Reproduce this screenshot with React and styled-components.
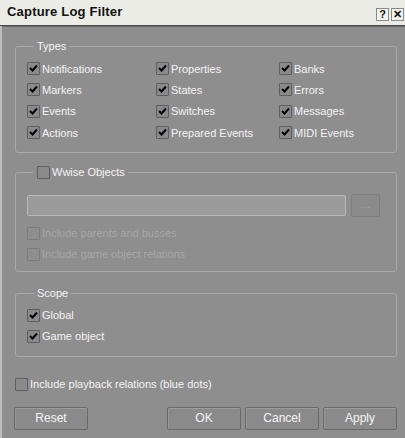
import React from 'react';
import styled, { createGlobalStyle } from 'styled-components';

const Global = createGlobalStyle`
  html, body {
    margin: 0;
    padding: 0;
    background: #8e8e8e;
  }
  * {
    box-sizing: border-box;
  }
`;

const Window = styled('div')`
  width: 405px;
  height: 438px;
  display: flex;
  flex-direction: column;
  background-color: #8e8e8e;
  font-family: 'Liberation Sans', Arial, sans-serif;
  font-size: 11px;
  color: #f4f4f4;
  overflow: hidden;
`;

const TitleBar = styled('div')`
  height: 26px;
  display: flex;
  align-items: center;
  justify-content: space-between;
  padding: 0 1px 2px 7px;
  background-color: #ecece6;
  border-bottom: 1px solid #4a4a4a;
  box-shadow: 0 1px 0 #6c6c6c;
`;

const Title = styled('div')`
  font-size: 13px;
  font-weight: bold;
  color: #111;
  letter-spacing: 0.2px;
`;

const TitleButtons = styled('div')`
  display: flex;
  gap: 2px;
  margin-top: 6px;
`;

const TitleButton = styled('div')`
  width: 13px;
  height: 13px;
  display: flex;
  align-items: center;
  justify-content: center;
  border: 1px solid #8a8a8a;
  background-color: #f2f2ee;
  color: #111;
  font-size: 11px;
  font-weight: bold;
  line-height: 1;
`;

const Body = styled('div')`
  flex: 1;
  display: flex;
  flex-direction: column;
  padding: 14px 8px 0 15px;
  border-left: 2px solid #bdbdbd;
`;

const Group = styled('fieldset')`
  margin: 0 0 ${p => p.$gap || 0}px -2px;
  padding: ${p => p.$pad || '5px 0 8px 11px'};
  border: 1px solid #a9a9a9;
  border-radius: 3px;
  min-width: 0;
`;

const Legend = styled('legend')`
  margin-left: ${p => p.$ml || 7}px;
  padding: 0 3px 0 ${p => p.$pl || 3}px;
  line-height: 13px;
  display: flex;
  align-items: center;
`;

const TypeGrid = styled('div')`
  display: grid;
  grid-template-columns: 129px 123px 1fr;
  grid-auto-rows: 21.4px;
`;

const Row = styled('label')`
  display: flex;
  align-items: center;
  gap: 2px;
  height: ${p => p.$h || 21}px;
  color: ${p => (p.$disabled ? '#a7a7a7' : '#f4f4f4')};
`;

const Box = styled('span')`
  width: 13px;
  height: 13px;
  flex: none;
  display: flex;
  align-items: center;
  justify-content: center;
  border: 1px solid ${p => (p.$disabled ? '#7c7c7c' : '#5e5e5e')};
  background-color: ${p => (p.$disabled ? '#8e8e8e' : '#8a8a8a')};
  border-radius: 1px;
`;

const FieldRow = styled('div')`
  display: flex;
  align-items: center;
  gap: 5px;
  margin-bottom: 6px;
`;

const Field = styled('div')`
  width: 319px;
  height: 21px;
  background-color: #9b9b9b;
  border: 1px solid #b8b8b8;
  border-radius: 2px;
`;

const Browse = styled('div')`
  width: 29px;
  height: 23px;
  display: flex;
  align-items: center;
  justify-content: center;
  background-color: #8b8b8b;
  border: 1px solid #7e7e7e;
  border-radius: 2px;
  color: #a9a9a9;
  font-size: 9px;
  letter-spacing: 1px;
`;

const Footer = styled('div')`
  display: flex;
  align-items: center;
  margin-top: ${p => p.$mt || 0}px;
  margin-left: -2px;
`;

const Button = styled('button')`
  width: 75px;
  height: 23px;
  margin-left: ${p => p.$ml ?? 4}px;
  padding: 0;
  font-family: inherit;
  font-size: 12px;
  color: #f6f6f6;
  background-color: #8a8a8a;
  border: 1px solid #696969;
  border-radius: 2px;
  box-shadow: inset 0 1px 0 #9c9c9c, inset 1px 0 0 #979797;
`;

const Check = ({ checked, disabled }) => (
  <Box $disabled={disabled}>
    {checked && (
      <svg width="9" height="9" viewBox="0 0 9 9">
        <path d="M1 4 L3.5 6.5 L8 1.5" stroke="#000" strokeWidth="2" fill="none" />
      </svg>
    )}
  </Box>
);

const Option = ({ label, checked, disabled, h }) => (
  <Row $disabled={disabled} $h={h}>
    <Check checked={checked} disabled={disabled} />
    {label}
  </Row>
);

const types = [
  'Notifications', 'Properties', 'Banks',
  'Markers', 'States', 'Errors',
  'Events', 'Switches', 'Messages',
  'Actions', 'Prepared Events', 'MIDI Events'
];

export default function App() {
  return (
    <Window>
      <Global />
      <TitleBar>
        <Title>Capture Log Filter</Title>
        <TitleButtons>
          <TitleButton>?</TitleButton>
          <TitleButton>✕</TitleButton>
        </TitleButtons>
      </TitleBar>
      <Body>
        <Group $gap={12}>
          <Legend>Types</Legend>
          <TypeGrid>
            {types.map(t => (
              <Option key={t} label={t} checked />
            ))}
          </TypeGrid>
        </Group>
        <Group $gap={15} $pad="14px 0 6px 11px">
          <Legend $ml={6} $pl={4}>
            <Option label="Wwise Objects" h={15} />
          </Legend>
          <FieldRow>
            <Field />
            <Browse>...</Browse>
          </FieldRow>
          <Option label="Include parents and busses" disabled />
          <Option label="Include game object relations" disabled />
        </Group>
        <Group $pad="5px 0 9px 11px">
          <Legend>Scope</Legend>
          <Option label="Global" checked />
          <Option label="Game object" checked />
        </Group>
        <Footer $mt={17}>
          <Option label="Include playback relations (blue dots)" />
        </Footer>
        <Footer $mt={12}>
          <Button $ml={-1}>Reset</Button>
          <Button $ml={79}>OK</Button>
          <Button>Cancel</Button>
          <Button>Apply</Button>
        </Footer>
      </Body>
    </Window>
  );
}
